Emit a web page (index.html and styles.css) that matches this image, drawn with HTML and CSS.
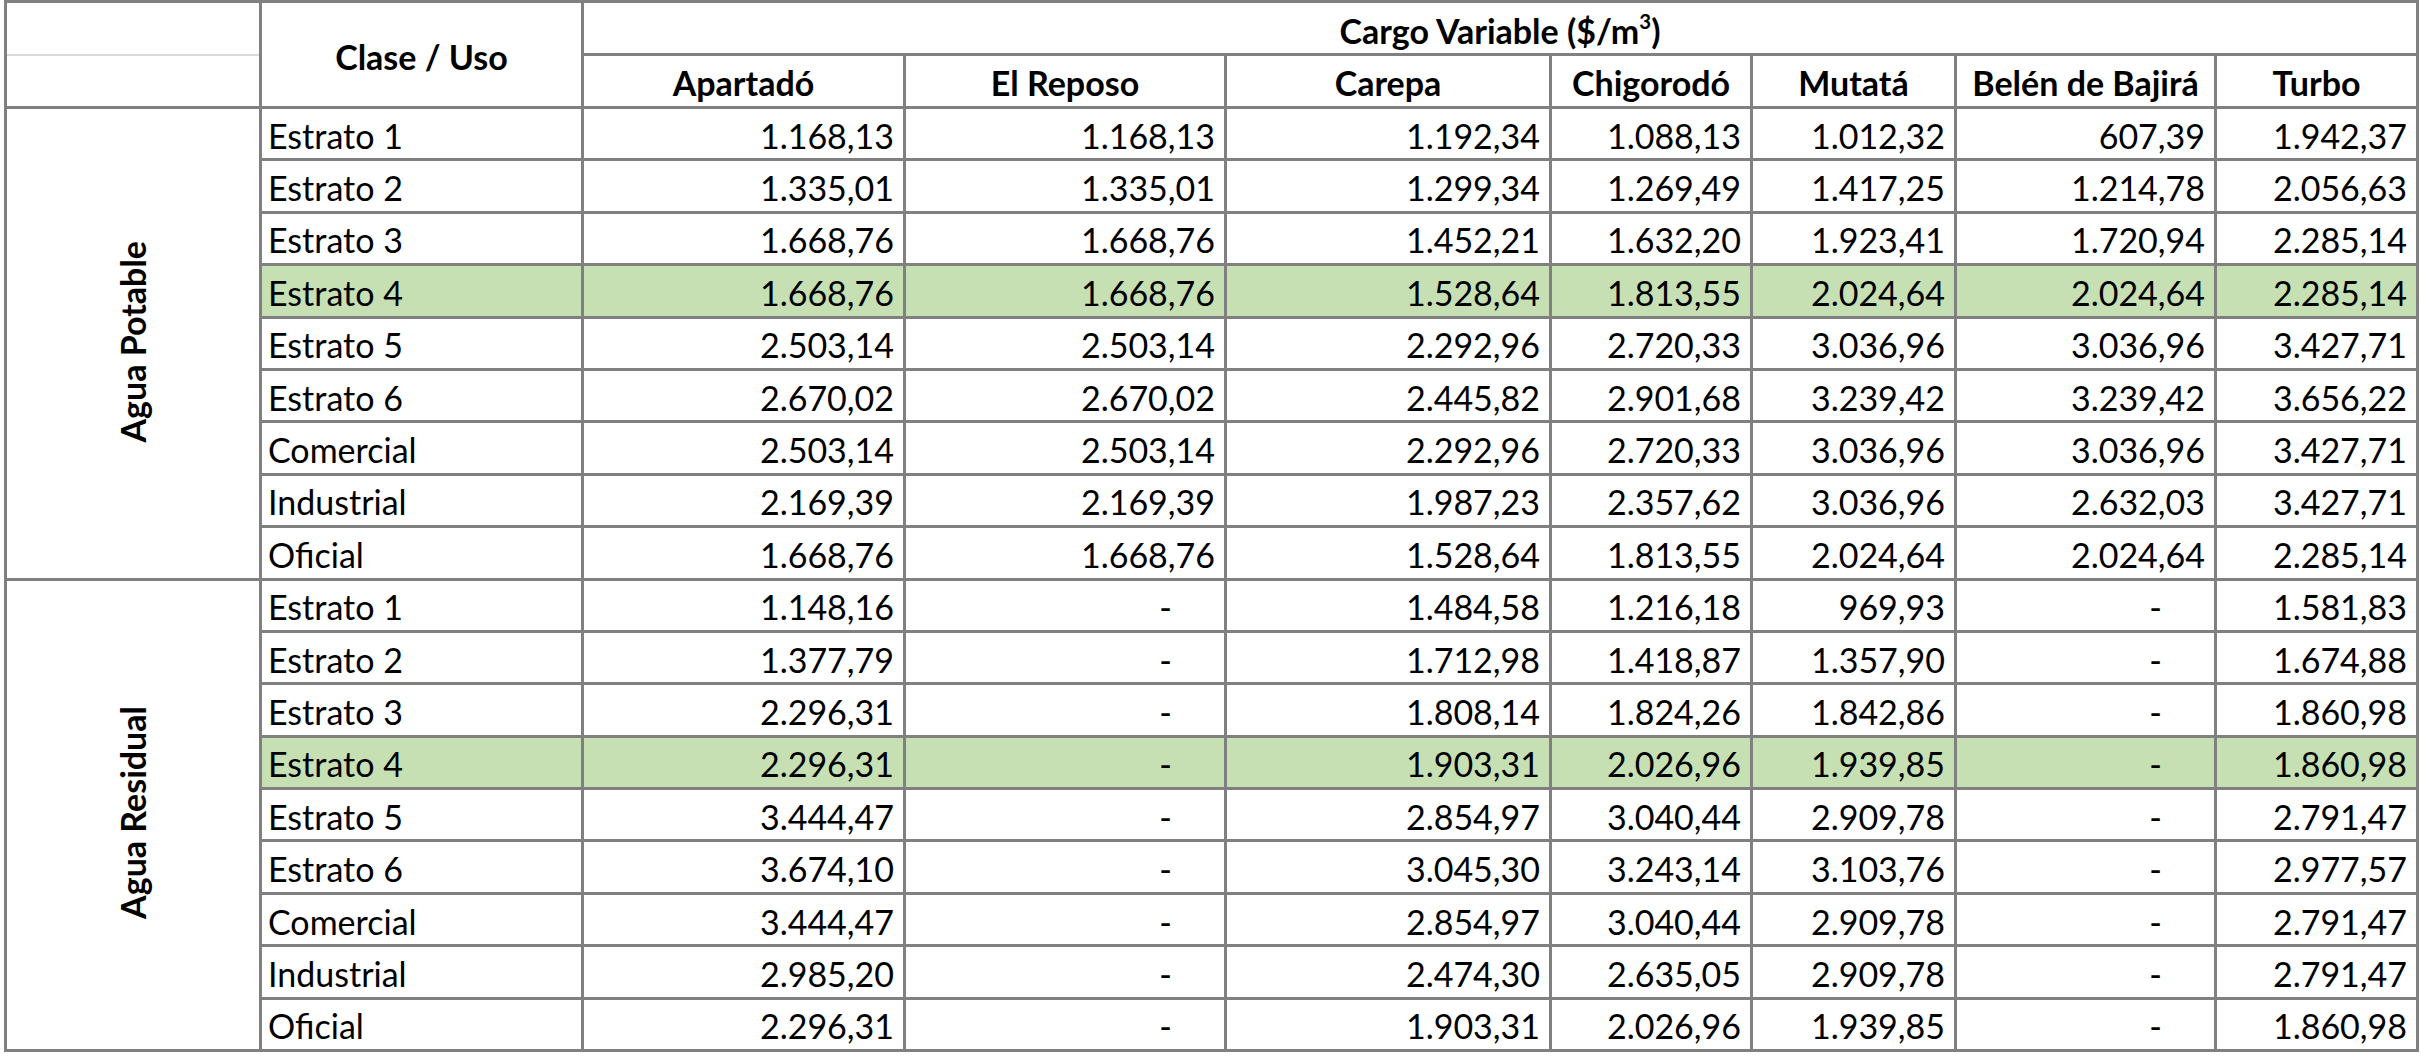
FILE: index.html
```html
<!DOCTYPE html>
<html lang="es">
<head>
<meta charset="utf-8">
<title>Cargo Variable</title>
<link rel="stylesheet" href="styles.css">
</head>
<body>
<table class="tarifas">
  <colgroup>
    <col class="c-grupo">
    <col class="c-clase">
    <col class="c-apartado">
    <col class="c-reposo">
    <col class="c-carepa">
    <col class="c-chigorodo">
    <col class="c-mutata">
    <col class="c-belen">
    <col class="c-turbo">
  </colgroup>
  <thead>
    <tr class="h1">
      <th class="blank blank-top"></th>
      <th class="clase" rowspan="2">Clase / Uso</th>
      <th class="cargo" colspan="7">Cargo Variable ($/m<sup>3</sup>)</th>
    </tr>
    <tr class="h2">
      <th class="blank blank-bot"></th>
      <th>Apartadó</th>
      <th>El Reposo</th>
      <th>Carepa</th>
      <th>Chigorodó</th>
      <th>Mutatá</th>
      <th>Belén de Bajirá</th>
      <th>Turbo</th>
    </tr>
  </thead>
  <tbody>
    <tr>
      <td class="grupo" rowspan="9"><div class="vert">Agua Potable</div></td>
      <td class="lbl">Estrato 1</td><td class="num">1.168,13</td><td class="num">1.168,13</td><td class="num">1.192,34</td><td class="num">1.088,13</td><td class="num">1.012,32</td><td class="num">607,39</td><td class="num">1.942,37</td>
    </tr>
    <tr>
      <td class="lbl">Estrato 2</td><td class="num">1.335,01</td><td class="num">1.335,01</td><td class="num">1.299,34</td><td class="num">1.269,49</td><td class="num">1.417,25</td><td class="num">1.214,78</td><td class="num">2.056,63</td>
    </tr>
    <tr>
      <td class="lbl">Estrato 3</td><td class="num">1.668,76</td><td class="num">1.668,76</td><td class="num">1.452,21</td><td class="num">1.632,20</td><td class="num">1.923,41</td><td class="num">1.720,94</td><td class="num">2.285,14</td>
    </tr>
    <tr class="hl">
      <td class="lbl">Estrato 4</td><td class="num">1.668,76</td><td class="num">1.668,76</td><td class="num">1.528,64</td><td class="num">1.813,55</td><td class="num">2.024,64</td><td class="num">2.024,64</td><td class="num">2.285,14</td>
    </tr>
    <tr>
      <td class="lbl">Estrato 5</td><td class="num">2.503,14</td><td class="num">2.503,14</td><td class="num">2.292,96</td><td class="num">2.720,33</td><td class="num">3.036,96</td><td class="num">3.036,96</td><td class="num">3.427,71</td>
    </tr>
    <tr>
      <td class="lbl">Estrato 6</td><td class="num">2.670,02</td><td class="num">2.670,02</td><td class="num">2.445,82</td><td class="num">2.901,68</td><td class="num">3.239,42</td><td class="num">3.239,42</td><td class="num">3.656,22</td>
    </tr>
    <tr>
      <td class="lbl">Comercial</td><td class="num">2.503,14</td><td class="num">2.503,14</td><td class="num">2.292,96</td><td class="num">2.720,33</td><td class="num">3.036,96</td><td class="num">3.036,96</td><td class="num">3.427,71</td>
    </tr>
    <tr>
      <td class="lbl">Industrial</td><td class="num">2.169,39</td><td class="num">2.169,39</td><td class="num">1.987,23</td><td class="num">2.357,62</td><td class="num">3.036,96</td><td class="num">2.632,03</td><td class="num">3.427,71</td>
    </tr>
    <tr>
      <td class="lbl">Oficial</td><td class="num">1.668,76</td><td class="num">1.668,76</td><td class="num">1.528,64</td><td class="num">1.813,55</td><td class="num">2.024,64</td><td class="num">2.024,64</td><td class="num">2.285,14</td>
    </tr>
    <tr class="sep">
      <td class="grupo" rowspan="9"><div class="vert">Agua Residual</div></td>
      <td class="lbl">Estrato 1</td><td class="num">1.148,16</td><td class="num dash">-</td><td class="num">1.484,58</td><td class="num">1.216,18</td><td class="num">969,93</td><td class="num dash">-</td><td class="num">1.581,83</td>
    </tr>
    <tr>
      <td class="lbl">Estrato 2</td><td class="num">1.377,79</td><td class="num dash">-</td><td class="num">1.712,98</td><td class="num">1.418,87</td><td class="num">1.357,90</td><td class="num dash">-</td><td class="num">1.674,88</td>
    </tr>
    <tr>
      <td class="lbl">Estrato 3</td><td class="num">2.296,31</td><td class="num dash">-</td><td class="num">1.808,14</td><td class="num">1.824,26</td><td class="num">1.842,86</td><td class="num dash">-</td><td class="num">1.860,98</td>
    </tr>
    <tr class="hl">
      <td class="lbl">Estrato 4</td><td class="num">2.296,31</td><td class="num dash">-</td><td class="num">1.903,31</td><td class="num">2.026,96</td><td class="num">1.939,85</td><td class="num dash">-</td><td class="num">1.860,98</td>
    </tr>
    <tr>
      <td class="lbl">Estrato 5</td><td class="num">3.444,47</td><td class="num dash">-</td><td class="num">2.854,97</td><td class="num">3.040,44</td><td class="num">2.909,78</td><td class="num dash">-</td><td class="num">2.791,47</td>
    </tr>
    <tr>
      <td class="lbl">Estrato 6</td><td class="num">3.674,10</td><td class="num dash">-</td><td class="num">3.045,30</td><td class="num">3.243,14</td><td class="num">3.103,76</td><td class="num dash">-</td><td class="num">2.977,57</td>
    </tr>
    <tr>
      <td class="lbl">Comercial</td><td class="num">3.444,47</td><td class="num dash">-</td><td class="num">2.854,97</td><td class="num">3.040,44</td><td class="num">2.909,78</td><td class="num dash">-</td><td class="num">2.791,47</td>
    </tr>
    <tr>
      <td class="lbl">Industrial</td><td class="num">2.985,20</td><td class="num dash">-</td><td class="num">2.474,30</td><td class="num">2.635,05</td><td class="num">2.909,78</td><td class="num dash">-</td><td class="num">2.791,47</td>
    </tr>
    <tr>
      <td class="lbl">Oficial</td><td class="num">2.296,31</td><td class="num dash">-</td><td class="num">1.903,31</td><td class="num">2.026,96</td><td class="num">1.939,85</td><td class="num dash">-</td><td class="num">1.860,98</td>
    </tr>
  </tbody>
</table>
</body>
</html>
```

FILE: styles.css
```css
html, body {
  margin: 0;
  padding: 0;
  background: #ffffff;
}

body {
  padding: 0 0 0 4px;
  font-family: Lato, "Liberation Sans", sans-serif;
  color: #000000;
}

.tarifas {
  border-collapse: collapse;
  table-layout: fixed;
  width: 2412px;
  font-size: 34px;
  line-height: 1;
}

.c-grupo { width: 255px; }
.c-clase { width: 322px; }
.c-apartado { width: 322px; }
.c-reposo { width: 321px; }
.c-carepa { width: 325px; }
.c-chigorodo { width: 201px; }
.c-mutata { width: 204px; }
.c-belen { width: 260px; }
.c-turbo { width: 202px; }

.tarifas th,
.tarifas td {
  border: 3px solid #808080;
  padding: 0;
  overflow: hidden;
  white-space: nowrap;
}

.tarifas th {
  font-weight: 700;
  text-align: center;
  vertical-align: middle;
  padding-top: 4px;
}

.h1 { height: 53px; }
.h2 { height: 53px; }

.tarifas th.blank-top {
  border-bottom: 2px solid #d9d9d9;
}
.tarifas th.blank-bot {
  border-top: 2px solid #d9d9d9;
}

.tarifas th.cargo {
  vertical-align: bottom;
  padding-bottom: 5px;
}

.cargo sup {
  font-size: 0.6em;
  line-height: 0;
  vertical-align: 0.75em;
}

.tarifas tbody tr {
  height: 52.4px;
}

.tarifas td {
  vertical-align: middle;
  padding-top: 4px;
}

.tarifas td.lbl {
  text-align: left;
  padding-left: 6px;
}

.tarifas td.num {
  text-align: right;
  padding-right: 9px;
}

.tarifas td.dash {
  padding-right: 52px;
}

.tarifas tr.hl td {
  background: #c6e0b4;
}

.tarifas td.grupo {
  text-align: center;
  vertical-align: middle;
  padding: 0;
  background: #ffffff;
}

.vert {
  display: inline-block;
  writing-mode: vertical-rl;
  transform: rotate(180deg);
  font-weight: 700;
}
```
